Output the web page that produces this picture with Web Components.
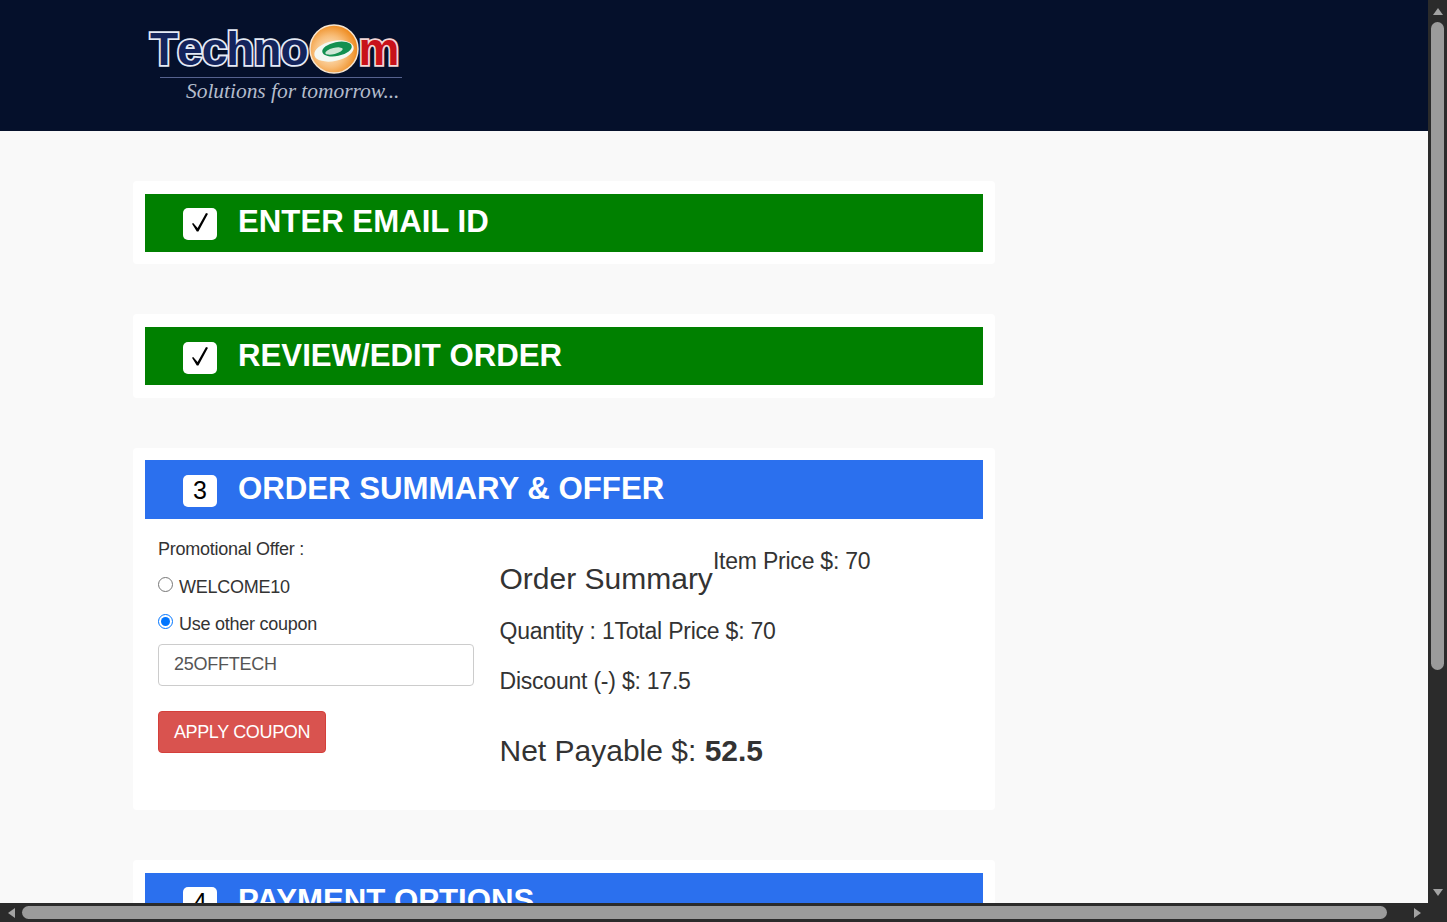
<!DOCTYPE html>
<html lang="en">
<head>
<meta charset="utf-8">
<title>Checkout</title>
<style>
html, body { margin: 0; height: 100%; overflow: hidden; }
body { font-family: "Liberation Sans", Arial, sans-serif; color: #333; }
</style>
</head>
<body>
<checkout-page>
    <site-header></site-header>
    <checkout-step number="1" heading="ENTER EMAIL ID" done></checkout-step>
    <checkout-step number="2" heading="REVIEW/EDIT ORDER" done></checkout-step>
    <checkout-step number="3" heading="ORDER SUMMARY &amp; OFFER">
        <div style="display:grid;grid-template-columns:341.5px 1fr">
            <coupon-form></coupon-form>
            <order-summary></order-summary>
        </div>
    </checkout-step>
    <checkout-step number="4" heading="PAYMENT OPTIONS"></checkout-step>
</checkout-page>

<script>
class CheckoutPage extends HTMLElement {
    connectedCallback() {
        let shadow = this.attachShadow({mode: 'open'});
        shadow.innerHTML = `
        <style>
            :host { display: grid; grid-template-columns: 1fr 19px; grid-template-rows: 1fr 19px; width: 1447px; height: 922px; }
            .view { overflow: hidden; background: #f9f9f9; }
            .steps { display: flex; flex-direction: column; gap: 50px; width: 862px; margin: 50.1px 0 0 133px; }
            .corner { background: #2b2b2b; }
        </style>
        <div class="view">
            <slot name="top"></slot>
            <div class="steps"><slot></slot></div>
        </div>
        <page-scrollbar dir="y"></page-scrollbar>
        <page-scrollbar dir="x"></page-scrollbar>
        <div class="corner"></div>`;
        this.querySelector('site-header').slot = 'top';
    }
}

class SiteHeader extends HTMLElement {
    connectedCallback() {
        let shadow = this.attachShadow({mode: 'open'});
        shadow.innerHTML = `
        <style>
            :host { display: block; height: 131px; background: #05102b; box-sizing: border-box; padding: 24px 0 0 150px; }
            .logo { width: 252px; }
            .word { display: flex; align-items: center; height: 50px; font: bold 46px "Liberation Sans", sans-serif; font-kerning: none; letter-spacing: -1px; }
            .word span { -webkit-text-stroke: 3.6px #e6ebf6; paint-order: stroke fill; line-height: 50px; }
            .tech { color: #14245c; }
            .m { color: #c8121a; margin-left: 0; -webkit-text-stroke-color: #f3d8d8 !important; }
            svg { flex: none; margin-left: 1px; }
            .rule { height: 1px; background: #56628f; margin: 3px 0 0 10px; }
            .tag { font: italic 21.5px "Liberation Serif", serif; letter-spacing: -.04px; color: #b4bccb; margin: 1px 0 0 36px; white-space: nowrap; line-height: 24px; }
        </style>
        <div class="logo">
            <div class="word">
                <span class="tech">Techno</span>
                <svg width="50" height="50" viewBox="0 0 50 50">
                    <defs>
                        <radialGradient id="ball" cx="42%" cy="55%" r="55%">
                            <stop offset="0" stop-color="#fdf0dc"/>
                            <stop offset=".6" stop-color="#f8bd78"/>
                            <stop offset="1" stop-color="#ef8f26"/>
                        </radialGradient>
                    </defs>
                    <circle cx="25" cy="25" r="24" fill="url(#ball)" stroke="#f6e6d2" stroke-width="1.5"/>
                    <ellipse cx="25" cy="27" rx="20" ry="10" fill="#f4f8f2" transform="rotate(-12 25 27)"/>
                    <ellipse cx="28" cy="25" rx="15" ry="7" fill="#139050" transform="rotate(-12 28 25)"/>
                    <ellipse cx="25" cy="27" rx="9" ry="3" fill="#cfe6d6" transform="rotate(-14 25 27)"/>
                </svg>
                <span class="m">m</span>
            </div>
            <div class="rule"></div>
            <div class="tag">Solutions for tomorrow...</div>
        </div>`;
    }
}

class CheckoutStep extends HTMLElement {
    connectedCallback() {
        let number = this.getAttribute('number');
        let heading = this.getAttribute('heading');
        let done = this.hasAttribute('done');
        let shadow = this.attachShadow({mode: 'open'});
        shadow.innerHTML = `
        <style>
            :host { display: block; background: #fff; border-radius: 4px; padding: 12.5px 12px; }
            .bar { display: flex; align-items: center; height: 58.4px; padding-left: 38px; color: #fff; background: ${done ? '#008000' : '#2b70ee'}; }
            .badge { display: flex; align-items: center; justify-content: center; box-sizing: border-box; width: 34px; height: 32px; margin-top: 3px; padding-bottom: 2px; border-radius: 5px; background: #fff; color: #000; font-size: 25px; }
            .badge svg { display: block; }
            h2 { margin: 0 0 1px 21px; font-size: 31.2px; font-weight: bold; line-height: 36px; white-space: nowrap; }
            .body:empty { display: none; }
        </style>
        <div class="bar">
            <span class="badge">${done
                ? '<svg width="18" height="20" viewBox="0 0 18 20"><path d="M1 10.8L2.2 10L6.6 15L15 0L17 .8L7.4 18.6H5.8Z" fill="#000"/></svg>'
                : number}</span>
            <h2>${heading}</h2>
        </div>
        <div class="body"><slot></slot></div>`;
    }
}

class CouponForm extends HTMLElement {
    connectedCallback() {
        let shadow = this.attachShadow({mode: 'open'});
        shadow.innerHTML = `
        <style>
            :host { display: block; box-sizing: border-box; height: 279px; padding: 18px 13px 0; font-size: 18px; letter-spacing: -.25px; line-height: 24px; }
            .title { margin-bottom: 14px; }
            label { display: flex; align-items: center; height: 24px; margin-bottom: 13px; }
            label span { margin-left: 6px; }
            input[type=radio] { width: 15px; height: 15px; margin: -5px 0 0 0; }
            label + label input { margin-top: -4px; }
            input[type=text] { display: block; box-sizing: border-box; width: 316px; height: 42px; margin-top: -5px; padding: 0 15px; border: 1px solid #ccc; border-radius: 4px; color: #555; font: inherit; letter-spacing: -.25px; outline: none; }
            button { display: block; width: 168px; height: 42px; margin-top: 25px; padding: 0; border: 1px solid #d43f3a; border-radius: 4px; background: #d9534f; color: #fff; font: inherit; letter-spacing: -.35px; }
        </style>
        <div class="title">Promotional Offer :</div>
        <label><input type="radio" name="offer"><span>WELCOME10</span></label>
        <label><input type="radio" name="offer" checked><span>Use other coupon</span></label>
        <input type="text" value="25OFFTECH">
        <button type="button">APPLY COUPON</button>`;
    }
}

class OrderSummary extends HTMLElement {
    connectedCallback() {
        let shadow = this.attachShadow({mode: 'open'});
        shadow.innerHTML = `
        <style>
            :host { display: block; padding: 28px 13px 0; font-size: 23px; line-height: 28px; letter-spacing: -.22px; }
            .head { display: flex; align-items: flex-start; }
            h3 { margin: 15px 0 -1px; font-size: 30px; font-weight: normal; line-height: 34px; letter-spacing: 0; }
            p { margin: 22px 0 0; }
            .net { margin-top: 39px; font-size: 30px; line-height: 34px; letter-spacing: 0; }
        </style>
        <div class="head"><h3>Order Summary</h3><span>Item Price $: 70</span></div>
        <p>Quantity : 1<span>Total Price $: 70</span></p>
        <p>Discount (-) $: 17.5</p>
        <p class="net">Net Payable $: <b>52.5</b></p>`;
    }
}

class PageScrollbar extends HTMLElement {
    connectedCallback() {
        let vertical = this.getAttribute('dir') == 'y';
        let shadow = this.attachShadow({mode: 'open'});
        // arrows: up/down for the vertical bar, left/right for the horizontal one
        let first = vertical ? '0,7 5,0 10,7' : '7,0 0,5 7,10';
        let last = vertical ? '0,0 10,0 5,7' : '0,0 7,5 0,10';
        let size = vertical ? 'width="10" height="7" viewBox="0 0 10 7"' : 'width="7" height="10" viewBox="0 0 7 10"';
        shadow.innerHTML = `
        <style>
            :host { display: flex; flex-direction: ${vertical ? 'column' : 'row'}; align-items: center; background: #2b2b2b; }
            .end { flex: none; display: flex; align-items: center; justify-content: center; ${vertical ? 'width: 19px; height: 22px;' : 'width: 22px; height: 19px;'} }
            .track { flex: 1; align-self: stretch; display: flex; flex-direction: ${vertical ? 'column' : 'row'}; padding: 3px; padding-${vertical ? 'top' : 'left'}: 0; padding-${vertical ? 'bottom' : 'right'}: 0; }
            .thumb { background: #9b9b9b; border-radius: 7px; ${vertical ? 'height: 648px;' : 'width: 1365px;'} }
        </style>
        <div class="end"><svg ${size}><polygon points="${first}" fill="#a3a3a3"/></svg></div>
        <div class="track"><div class="thumb"></div></div>
        <div class="end"><svg ${size}><polygon points="${last}" fill="#a3a3a3"/></svg></div>`;
    }
}

customElements.define('checkout-page', CheckoutPage);
customElements.define('site-header', SiteHeader);
customElements.define('checkout-step', CheckoutStep);
customElements.define('coupon-form', CouponForm);
customElements.define('order-summary', OrderSummary);
customElements.define('page-scrollbar', PageScrollbar);
</script>
</body>
</html>
